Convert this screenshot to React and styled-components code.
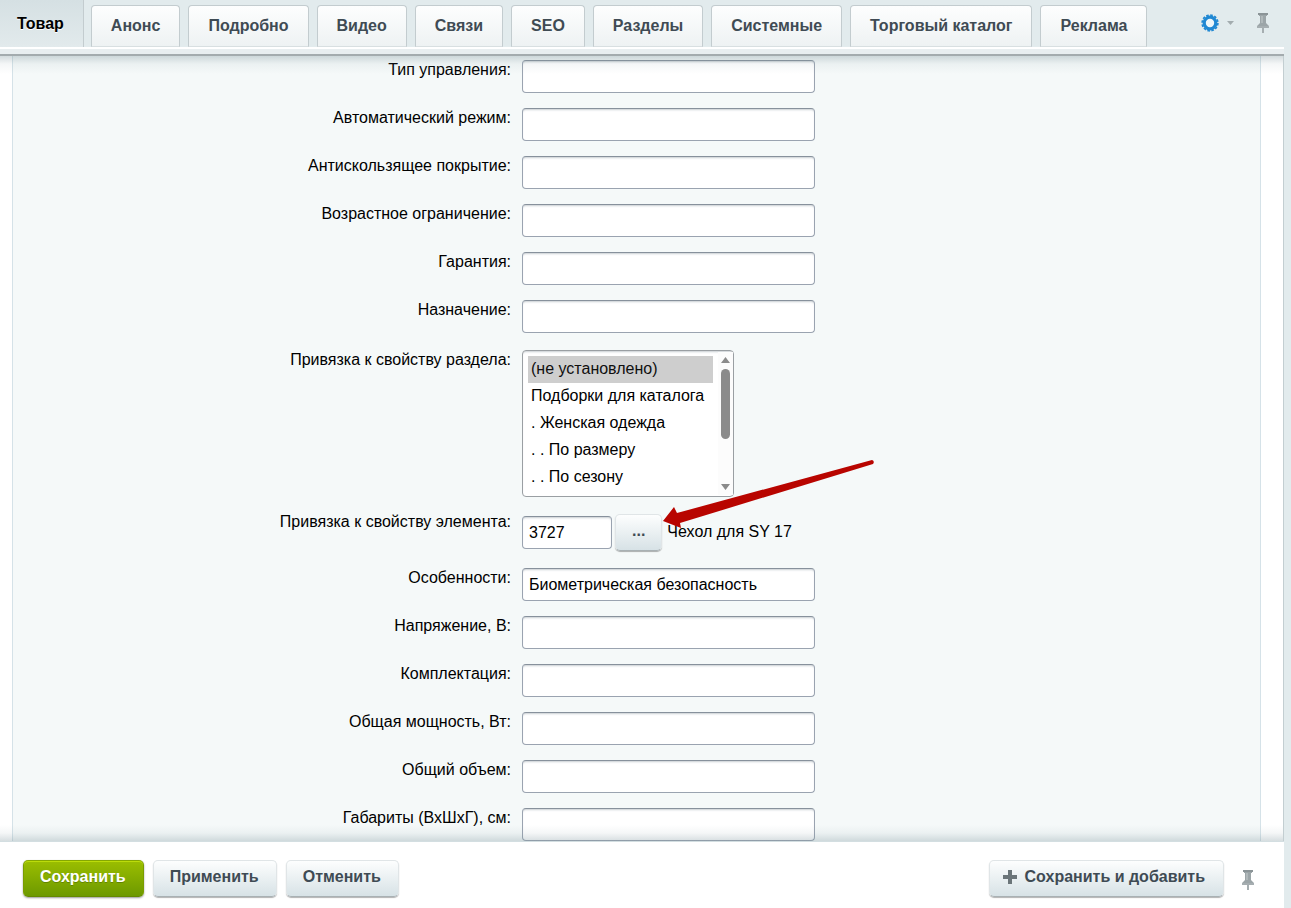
// App.jsx
import React, { useState } from "react";
import styled, { createGlobalStyle } from "styled-components";

const tabs = [
    "Товар",
    "Анонс",
    "Подробно",
    "Видео",
    "Связи",
    "SEO",
    "Разделы",
    "Системные",
    "Торговый каталог",
    "Реклама",
];

const fieldsBefore = [
    { id: "control", label: "Тип управления:" },
    { id: "auto", label: "Автоматический режим:" },
    { id: "antislip", label: "Антискользящее покрытие:" },
    { id: "age", label: "Возрастное ограничение:" },
    { id: "warranty", label: "Гарантия:" },
    { id: "purpose", label: "Назначение:" },
];

const fieldsAfter = [
    { id: "features", label: "Особенности:", value: "Биометрическая безопасность" },
    { id: "voltage", label: "Напряжение, В:" },
    { id: "kit", label: "Комплектация:" },
    { id: "power", label: "Общая мощность, Вт:" },
    { id: "volume", label: "Общий объем:" },
    { id: "size", label: "Габариты (ВхШхГ), см:" },
];

const sections = [
    "(не установлено)",
    "Подборки для каталога",
    ". Женская одежда",
    ". . По размеру",
    ". . По сезону",
];

const PinIcon = () => (
    <svg width="14" height="22" viewBox="0 0 14 22" aria-hidden="true">
        <path d="M3 2h8v2h-1v7l3 3v2H1v-2l3-3V4H3z" fill="#9ca5a8" />
        <path d="M2 1h10v2H2z" fill="#8b9497" />
        <path d="M5 4h2v7H5z" fill="#b0b8ba" />
        <path d="M1 14h12v2H1z" fill="#a6aeb1" />
        <path d="M6 16h2v5H6z" fill="#a6aeb1" />
    </svg>
);

const GearIcon = () => (
    <svg width="18" height="18" viewBox="0 0 18 18" aria-hidden="true">
        <circle cx="9" cy="9" r="5.800" fill="#eef6f9" stroke="#2088d3" strokeWidth="3.200" />
        <circle
            cx="9"
            cy="9"
            r="7.900"
            fill="none"
            stroke="#2088d3"
            strokeWidth="1.600"
            strokeDasharray="2.600 1.536"
        />
    </svg>
);

const PlusIcon = () => (
    <svg width="14" height="14" viewBox="0 0 14 14" aria-hidden="true">
        <path d="M5 0h4v5h5v4H9v5H5V9H0V5h5z" fill="#6b7579" />
    </svg>
);

const Field = ({ id, label, value }) => (
    <Row>
        <Label htmlFor={id}>{label}</Label>
        <TextInput id={id} type="text" defaultValue={value} />
    </Row>
);

const App = () => {
    const [active, setActive] = useState("Товар");

    return (
        <>
            <GlobalStyle />
            <Page>
                <Header>
                    <Tabs>
                        {tabs.map((tab) => (
                            <Tab key={tab} type="button" $active={tab === active} onClick={() => setActive(tab)}>
                                {tab}
                            </Tab>
                        ))}
                    </Tabs>
                    <Tools>
                        <IconButton type="button" aria-label="Настройки">
                            <GearIcon />
                            <svg width="8" height="4" viewBox="0 0 8 4" aria-hidden="true">
                                <path d="M0 0h7L3.500 4z" fill="#a3acaf" />
                            </svg>
                        </IconButton>
                        <IconButton type="button" aria-label="Закрепить вкладки">
                            <PinIcon />
                        </IconButton>
                    </Tools>
                </Header>

                <Main>
                    <Form>
                        {fieldsBefore.map((field) => (
                            <Field key={field.id} {...field} />
                        ))}
                        <Row $spaced>
                            <Label htmlFor="section">Привязка к свойству раздела:</Label>
                            <ListWrap>
                                <List id="section" size={5} defaultValue="0">
                                    {sections.map((name, i) => (
                                        <option key={name} value={i}>
                                            {name}
                                        </option>
                                    ))}
                                </List>
                                {/* list scrollbar */}
                                <ScrollBar width="15" height="143" viewBox="0 1 15 143" aria-hidden="true">
                                    <path d="M0 0h15v145H0z" fill="#fcfcfc" />
                                    <path d="M3 12h9L7.500 6zM3 133h9l-4.500 6z" fill="#8b8b8b" />
                                    <rect x="3" y="18" width="9" height="70" rx="4.500" fill="#8b8b8b" />
                                </ScrollBar>
                            </ListWrap>
                        </Row>
                        <Row>
                            <Label htmlFor="element">Привязка к свойству элемента:</Label>
                            <Picker>
                                <TextInput id="element" type="text" $short defaultValue="3727" />
                                <Button type="button" $small>
                                    ...
                                </Button>
                                <span>Чехол для SY 17</span>
                                <Arrow width="214" height="70" viewBox="0 0 214 70" aria-hidden="true">
                                    <path
                                        d="M1 61L12 47L15 53L210 0Q213 1 211 4L18 63L19 68Z"
                                        fill="#b80500"
                                    />
                                </Arrow>
                            </Picker>
                        </Row>
                        {fieldsAfter.map((field) => (
                            <Field key={field.id} {...field} />
                        ))}
                    </Form>
                </Main>

                <Footer>
                    <Button type="submit" $primary>
                        Сохранить
                    </Button>
                    <Button type="button">Применить</Button>
                    <Button type="button">Отменить</Button>
                    <Spacer />
                    <Button type="button" $icon>
                        <PlusIcon />
                        Сохранить и добавить
                    </Button>
                    <IconButton type="button" aria-label="Закрепить панель">
                        <PinIcon />
                    </IconButton>
                </Footer>
            </Page>
        </>
    );
};

const GlobalStyle = createGlobalStyle`
  * {
    box-sizing: border-box;
  }

  body {
    margin: 0;
    background: #e2ebed;
    color: #000;
    font-family: "Liberation Sans", Arial, sans-serif;
    font-size: 16px;
  }

  button, input, select {
    font: inherit;
  }
`;

const Page = styled.div`
  display: flex;
  flex-direction: column;
  height: 100vh;
  margin-right: 7px;
`;

const Header = styled.header`
  display: flex;
  justify-content: space-between;
  flex-shrink: 0;
  height: 56px;
  background: linear-gradient(#fff 0 2px, #e8eef0 2px 7px, #a3abae 7px 9px) bottom / 100% 9px no-repeat, #e2ebed;
`;

const Tabs = styled.nav`
  display: flex;
  align-items: flex-start;
  gap: 8px;
`;

const Tab = styled.button`
  height: 42px;
  margin-top: 5px;
  padding: 0 19px;
  border: 1px solid #c3cccf;
  border-bottom-color: #d8dfe1;
  border-radius: 4px 4px 0 0;
  background: linear-gradient(#fdfefe, #eef2f3);
  color: #3f4b54;
  font-weight: 700;
  line-height: 20px;
  white-space: nowrap;
  cursor: pointer;

  ${({ $active }) =>
      $active &&
      `
    height: 47px;
    margin: 0 -1px 0 0;
    padding: 0 19px 0 17px;
    border-width: 0 1px 0 0;
    border-radius: 0;
    background: linear-gradient(#d5e0e3, #e2eaec);
    color: #000;
    text-shadow: 0 1px #fff;
  `}
`;

const Tools = styled.div`
  display: flex;
  gap: 21px;
  height: 46px;
  padding-right: 14px;
`;

const IconButton = styled.button`
  display: flex;
  align-items: center;
  gap: 8px;
  padding: 0;
  border: 0;
  background: none;
  cursor: pointer;
`;

const Main = styled.main`
  position: relative;
  flex: 1;
  min-height: 0;
  padding: 0 22px 0 12px;
  overflow: hidden;
  border-right: 1px solid #c3ced1;
  background: #fff;

  /* shadows cast by the fixed bars */
  &::after {
    content: "";
    position: absolute;
    inset: 0;
    background:
      linear-gradient(rgba(120, 145, 153, 0.32), rgba(120, 145, 153, 0.08) 8px, transparent) top / 100% 18px no-repeat,
      linear-gradient(transparent, rgba(120, 145, 153, 0.08) 8px, rgba(120, 145, 153, 0.3)) bottom / 100% 16px no-repeat;
    pointer-events: none;
  }
`;

const Form = styled.form`
  display: flex;
  flex-direction: column;
  gap: 15px;
  padding: 4px 2px 15px 0;
  border: solid #d5e2e8;
  border-width: 0 1px;
  background: #f5f9f9;
`;

const Row = styled.div`
  display: grid;
  grid-template-columns: 40% 1fr;
  column-gap: 11px;
  align-items: start;
  margin-top: ${({ $spaced }) => ($spaced ? "2px" : "0")};
`;

const Label = styled.label`
  line-height: 20px;
  text-align: right;
`;

const TextInput = styled.input`
  width: ${({ $short }) => ($short ? "90px" : "293px")};
  height: 33px;
  padding: 0 6px;
  border: 1px solid #9aa3b0;
  border-top-color: #87919c;
  border-radius: 4px;
  outline: 0;
  background: #fff;
  box-shadow: inset 0 2px 2px -1px rgba(120, 135, 145, 0.4);
`;

const ListWrap = styled.div`
  position: relative;
  width: 212px;
`;

const List = styled.select`
  display: block;
  width: 100%;
  height: 147px;
  padding: 5px 20px 5px 5px;
  overflow: hidden;
  border: 1px solid #9a9fa3;
  border-radius: 4px;
  outline: 0;
  background: #fff;
  box-shadow: inset 0 2px 2px -1px rgba(120, 135, 145, 0.4);

  option {
    height: 27px;
    min-height: 27px;
    padding: 4px 3px;
  }
`;

const ScrollBar = styled.svg`
  position: absolute;
  top: 2px;
  right: 1px;
`;

const Picker = styled.div`
  position: relative;
  display: flex;
  align-items: center;
  gap: 3px;
  height: 41px;

  span {
    margin-left: 2px;
    padding-bottom: 2px;
  }
`;

const Arrow = styled.svg`
  position: absolute;
  bottom: 23px;
  left: 140px;
  pointer-events: none;
`;

const Button = styled.button`
  display: flex;
  align-items: center;
  justify-content: center;
  gap: 8px;
  height: 37px;
  padding: ${({ $small, $icon }) => ($small ? "0 16px 3px" : $icon ? "0 18px 3px 13px" : "0 17px 3px 16px")};
  border: 1px solid #e0e5e7;
  border-bottom-color: #a9b1b4;
  border-radius: 5px;
  background: linear-gradient(#fdfefe, #d7e2e6);
  box-shadow: 0 1px 1px rgba(0, 0, 0, 0.3);
  color: #3f4b54;
  font-weight: 700;
  white-space: nowrap;
  cursor: pointer;

  ${({ $primary }) =>
      $primary &&
      `
    border-color: #86a800 #7a9c00 #648900;
    background: linear-gradient(#9bbe00, #6d9900);
    box-shadow: inset 0 1px #bcdc0a, 0 1px 2px rgba(0, 0, 0, 0.4);
    color: #fff;
    text-shadow: 0 1px rgba(70, 100, 0, 0.5);
  `}
`;

const Footer = styled.footer`
  display: flex;
  align-items: flex-start;
  flex-shrink: 0;
  gap: 9px;
  height: 67px;
  padding: 18px 29px 0 23px;
  border-top: 1px solid #d3dee1;
  background: #fff;

  ${IconButton} {
    height: 40px;
    margin-left: 8px;
  }
`;

const Spacer = styled.div`
  flex: 1;
`;

export default App;
